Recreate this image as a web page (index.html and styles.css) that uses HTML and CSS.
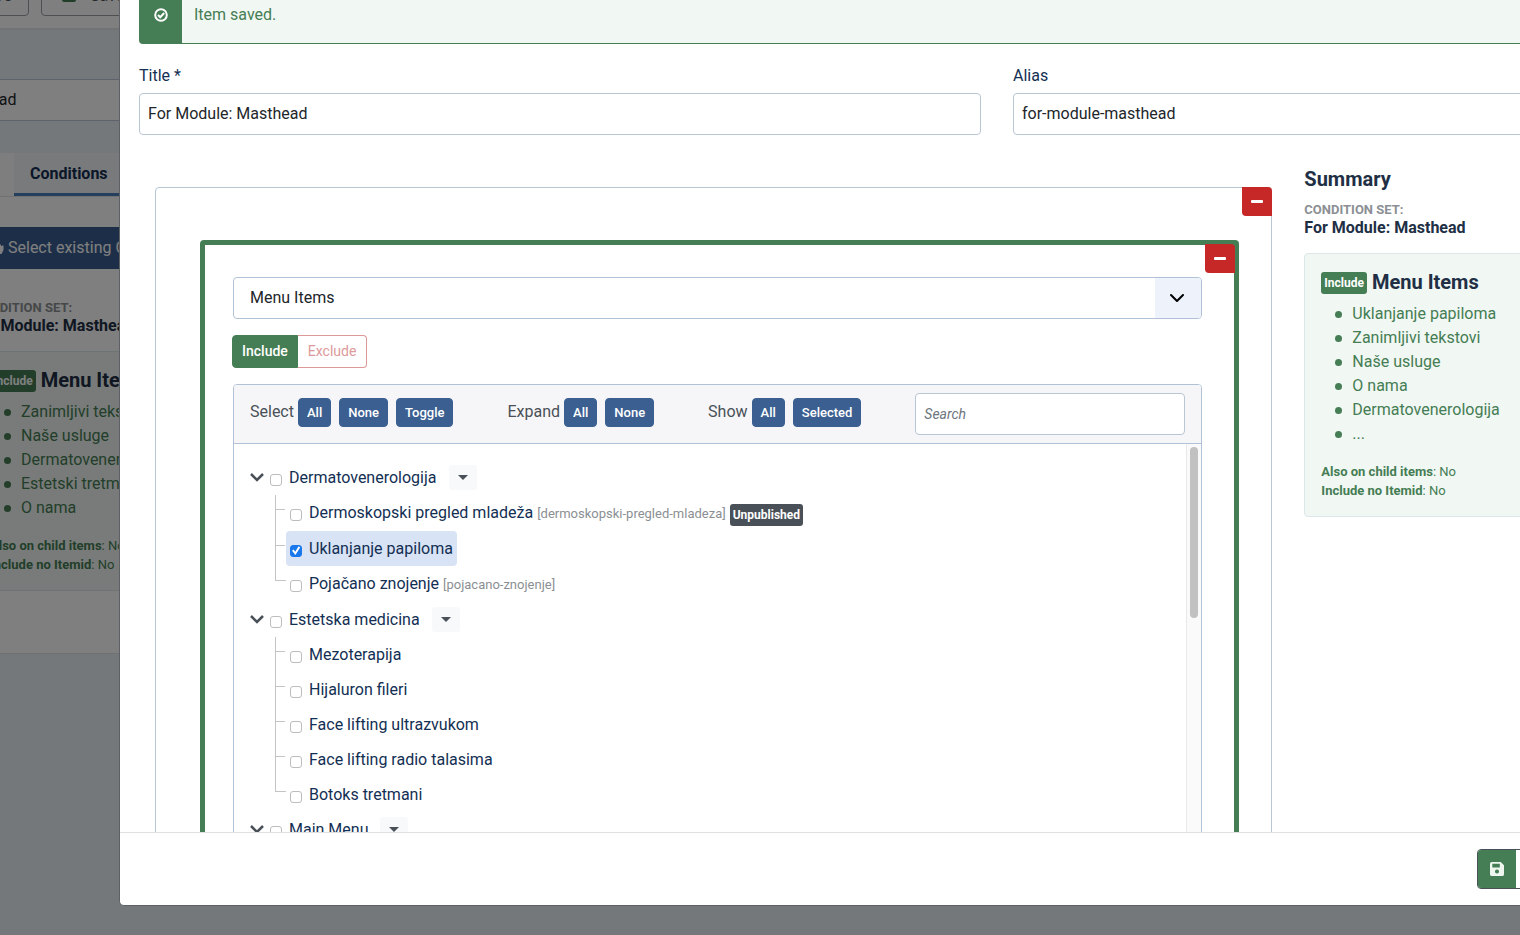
FILE: index.html
```html
<!DOCTYPE html>
<html lang="en">
<head>
  <meta charset="UTF-8">
  <title>Conditions</title>
  <link rel="stylesheet" href="styles.css">
</head>
<body>

  <!-- Module edit page, under the backdrop -->
  <div class="page">
    <div class="toolbar">
      <button class="tool-button" type="button">Save</button>
      <button class="tool-button" type="button"><span class="tool-icon"></span>Save &amp; Close</button>
    </div>

    <input class="text-input page-title" type="text" aria-label="Title" value="For Module: Masthead">

    <div class="tabs">
      <button class="tab" type="button">Module</button>
      <button class="tab active" type="button">Conditions</button>
    </div>

    <div class="panel">
      <button class="select-button" type="button">
        <svg width="15" height="16" viewBox="0 0 15 16"><path d="M4 8V2a1 1 0 0 1 2 0v4h1V5h2v1h1V5.500h2V7h1V6.500h1.500V11l-2 4H6L1 9.500 2.500 8 4 9z" fill="currentColor"/></svg>
        Select existing Condition Set
      </button>
      <div class="summary">
        <div class="summary-label">Condition Set:</div>
        <div class="summary-name">For Module: Masthead</div>
        <div class="summary-card">
          <h3><span class="badge badge-green">Include</span>Menu Items</h3>
          <ul>
            <li>Zanimljivi tekstovi</li>
            <li>Naše usluge</li>
            <li>Dermatovenerologija</li>
            <li>Estetski tretmani</li>
            <li>O nama</li>
          </ul>
          <p><b>Also on child items</b>: No<br><b>Include no Itemid</b>: No</p>
        </div>
      </div>
    </div>
  </div>

  <div class="backdrop"></div>

  <!-- Condition modal -->
  <div class="modal">
    <div class="modal-body">
      <div class="alert">
        <div class="alert-icon">
          <svg width="14" height="14" viewBox="0 0 14 14" fill="none" stroke="currentColor" stroke-width="2"><circle cx="7" cy="7" r="5.800"/><path d="M4 7l2.200 2.200L10.200 5"/></svg>
        </div>
        <div class="alert-text">Item saved.</div>
      </div>

      <div class="grid fields">
        <div class="field">
          <label for="title">Title *</label>
          <input class="text-input" id="title" type="text" value="For Module: Masthead">
        </div>
        <div class="field">
          <label for="alias">Alias</label>
          <input class="text-input" id="alias" type="text" value="for-module-masthead">
        </div>
      </div>

      <div class="grid columns">
        <div class="group">
          <button class="remove-button" type="button" aria-label="Remove group"><span class="minus"></span></button>

          <div class="rule">
            <button class="remove-button" type="button" aria-label="Remove rule"><span class="minus"></span></button>

            <div class="select-wrap">
              <select class="select" aria-label="Rule type">
                <option>Menu Items</option>
              </select>
              <span class="select-arrow">
                <svg width="16" height="16" viewBox="0 0 16 16" fill="none" stroke="#000" stroke-width="2" stroke-linecap="round" stroke-linejoin="round"><path d="M1 5l6 6 6-6"/></svg>
              </span>
            </div>

            <div class="switch">
              <input type="radio" name="mode" id="mode-include" checked>
              <label for="mode-include">Include</label>
              <input type="radio" name="mode" id="mode-exclude">
              <label for="mode-exclude">Exclude</label>
            </div>

            <div class="tree">
              <div class="tree-header">
                <div class="tree-actions">
                  <span>Select</span>
                  <button class="small-button" type="button">All</button>
                  <button class="small-button" type="button">None</button>
                  <button class="small-button" type="button">Toggle</button>
                </div>
                <div class="tree-actions">
                  <span>Expand</span>
                  <button class="small-button" type="button">All</button>
                  <button class="small-button" type="button">None</button>
                </div>
                <div class="tree-actions">
                  <span>Show</span>
                  <button class="small-button" type="button">All</button>
                  <button class="small-button" type="button">Selected</button>
                </div>
                <input class="text-input search" type="text" placeholder="Search" aria-label="Search">
              </div>

              <div class="tree-body">
                <ul class="tree-list">
                  <li>
                    <div class="tree-row">
                      <svg class="chevron" width="14" height="10" viewBox="0 0 14 10"><path d="M1 1l6 6 6-6"/></svg>
                      <label class="tree-item"><input type="checkbox">Dermatovenerologija</label>
                      <button class="caret-button" type="button" aria-label="Actions"><span class="caret"></span></button>
                    </div>
                    <ul class="tree-children">
                      <li class="tree-row noted">
                        <span class="branch"></span>
                        <label class="tree-item"><input type="checkbox">Dermoskopski pregled mladeža</label>
                        <small>[dermoskopski-pregled-mladeza]</small>
                        <span class="badge badge-dark">Unpublished</span>
                      </li>
                      <li class="tree-row">
                        <span class="branch"></span>
                        <label class="tree-item selected"><input type="checkbox" checked>Uklanjanje papiloma</label>
                      </li>
                      <li class="tree-row noted">
                        <span class="branch"></span>
                        <label class="tree-item"><input type="checkbox">Pojačano znojenje</label>
                        <small>[pojacano-znojenje]</small>
                      </li>
                    </ul>
                  </li>
                  <li>
                    <div class="tree-row">
                      <svg class="chevron" width="14" height="10" viewBox="0 0 14 10"><path d="M1 1l6 6 6-6"/></svg>
                      <label class="tree-item"><input type="checkbox">Estetska medicina</label>
                      <button class="caret-button" type="button" aria-label="Actions"><span class="caret"></span></button>
                    </div>
                    <ul class="tree-children">
                      <li class="tree-row"><span class="branch"></span><label class="tree-item"><input type="checkbox">Mezoterapija</label></li>
                      <li class="tree-row"><span class="branch"></span><label class="tree-item"><input type="checkbox">Hijaluron fileri</label></li>
                      <li class="tree-row"><span class="branch"></span><label class="tree-item"><input type="checkbox">Face lifting ultrazvukom</label></li>
                      <li class="tree-row"><span class="branch"></span><label class="tree-item"><input type="checkbox">Face lifting radio talasima</label></li>
                      <li class="tree-row"><span class="branch"></span><label class="tree-item"><input type="checkbox">Botoks tretmani</label></li>
                    </ul>
                  </li>
                  <li>
                    <div class="tree-row">
                      <svg class="chevron" width="14" height="10" viewBox="0 0 14 10"><path d="M1 1l6 6 6-6"/></svg>
                      <label class="tree-item"><input type="checkbox">Main Menu</label>
                      <button class="caret-button" type="button" aria-label="Actions"><span class="caret"></span></button>
                    </div>
                  </li>
                </ul>
                <div class="scrollbar"><div class="thumb"></div></div>
              </div>
            </div>
          </div>
        </div>

        <div class="summary">
          <h2>Summary</h2>
          <div class="summary-label">Condition Set:</div>
          <div class="summary-name">For Module: Masthead</div>
          <div class="summary-card">
            <h3><span class="badge badge-green">Include</span>Menu Items</h3>
            <ul>
              <li>Uklanjanje papiloma</li>
              <li>Zanimljivi tekstovi</li>
              <li>Naše usluge</li>
              <li>O nama</li>
              <li>Dermatovenerologija</li>
              <li>...</li>
            </ul>
            <p><b>Also on child items</b>: No<br><b>Include no Itemid</b>: No</p>
          </div>
        </div>
      </div>
    </div>

    <div class="modal-footer">
      <button class="save-button" type="button" aria-label="Save">
        <span class="save-icon">
          <svg width="14" height="14" viewBox="0 0 15 15"><path fill="currentColor" fill-rule="evenodd" d="M2 0h9.500L15 3.500V13a2 2 0 0 1-2 2H2a2 2 0 0 1-2-2V2a2 2 0 0 1 2-2zM2.500 2v4h8V2zM7.500 8a2.200 2.200 0 1 0 0 4.400A2.200 2.200 0 0 0 7.500 8z"/></svg>
        </span>
      </button>
    </div>
  </div>

</body>
</html>
```

FILE: styles.css
```css
* {
  box-sizing: border-box;
}

body {
  margin: 0;
  height: 100vh;
  overflow: hidden;
  background-color: #ebf1f6;
  font-family: Roboto, "Liberation Sans", sans-serif;
  font-size: 16px;
  line-height: 24px;
  color: #212529;
}

button, input, select {
  font-family: inherit;
  font-size: 16px;
  margin: 0;
}

h2, h3, p, ul {
  margin: 0;
  padding: 0;
}

h2, h3 {
  font-size: 20px;
  line-height: 24px;
  font-weight: bold;
  color: #212f45;
}

.text-input {
  display: block;
  width: 100%;
  height: 42px;
  padding: 0 8px 2px;
  border: 1px solid #b9c6d4;
  border-radius: 4px;
  background-color: white;
  color: #22262a;
}

/* Page behind */
.page {
  margin: -36px 0 0 -152px;
}

.toolbar {
  display: flex;
  gap: 12px;
  padding: 12px 0 12px 61px;
  background-color: white;
  border-bottom: 2px solid #e2e6ea;
}

.tool-button {
  display: flex;
  align-items: center;
  justify-content: flex-end;
  gap: 14px;
  width: 120px;
  height: 40px;
  padding: 0 16px 2px 20px;
  border: 1px solid #9a9fa6;
  border-radius: 4px;
  background-color: white;
  color: #495057;
  white-space: nowrap;
}

.tool-button + .tool-button {
  width: 180px;
  justify-content: flex-start;
}

.tool-icon {
  width: 14px;
  height: 14px;
  border-radius: 2px;
  background-color: #457d54;
}

.page-title {
  margin-top: 49px;
}

.tabs {
  display: flex;
  margin-top: 32px;
  background-color: white;
  border-bottom: 1px solid #dfe3e7;
}

.tab {
  min-width: 166px;
  height: 43px;
  padding: 0 16px;
  border: none;
  border-bottom: 3px solid transparent;
  background-color: #fdfdfe;
  font-weight: bold;
  text-align: left;
  color: #132f53;
}

.tab.active {
  background-color: #f3f5f7;
  border-bottom-color: #4a80bd;
}

.panel {
  padding: 30px 0 62px 125px;
  background-color: #fefefe;
  border-bottom: 1px solid #dfe3e7;
}

.select-button {
  display: flex;
  align-items: center;
  gap: 4px;
  width: 100%;
  height: 42px;
  margin-bottom: 29px;
  padding: 0 16px 2px;
  border: none;
  background-color: #3b5f91;
  color: white;
}

.backdrop {
  position: fixed;
  inset: 0;
  background-color: rgba(0, 0, 0, 0.5);
}

/* Modal */
.modal {
  position: fixed;
  top: 0;
  left: 119px;
  right: -355px;
  bottom: 29px;
  display: flex;
  flex-direction: column;
  border: 1px solid #5d6165;
  border-top: none;
  border-radius: 0 0 5px 5px;
  background-color: white;
}

.modal-body {
  flex: 1;
  min-height: 0;
  overflow: hidden;
  padding: 0 19px;
}

.modal-footer {
  display: flex;
  justify-content: flex-end;
  padding: 16px 15px;
  border-top: 1px solid #dee0e2;
}

.save-button {
  width: 382px;
  height: 40px;
  padding: 0;
  border: 1px solid #495057;
  border-radius: 4px;
  background-color: white;
  overflow: hidden;
}

.save-icon {
  display: flex;
  align-items: center;
  justify-content: center;
  width: 38px;
  height: 38px;
  background-color: #457d54;
  color: #edf6ef;
}

.alert {
  display: flex;
  border: 1px solid #457d54;
  border-top: none;
  border-radius: 0 0 4px 4px;
  background-color: #f1f7f3;
  color: #457d54;
}

.alert-icon {
  display: flex;
  justify-content: center;
  width: 42px;
  padding-top: 8px;
  background-color: #457d54;
  color: white;
}

.alert-text {
  padding: 3px 12px 16px;
}

.grid {
  display: grid;
  grid-template-columns: repeat(12, 1fr);
  column-gap: 32px;
}

.fields {
  margin-top: 20px;
}

.field {
  grid-column: span 6;
}

.field label {
  display: block;
  margin-bottom: 5px;
  color: #132f53;
}

.columns {
  margin-top: 32px;
  align-items: start;
}

.group {
  grid-column: span 8;
  position: relative;
  margin: 20px 0 0 16px;
  padding: 52px 32px 32px 44px;
  border: 1px solid #b9c6d4;
  border-radius: 4px;
}

.rule {
  position: relative;
  padding: 32px 32px 32px 28px;
  border: 5px solid #457d54;
  border-radius: 4px;
}

.remove-button {
  position: absolute;
  top: -1px;
  right: -1px;
  display: flex;
  align-items: center;
  justify-content: center;
  width: 30px;
  height: 29px;
  padding: 0;
  border: none;
  border-radius: 0 4px 0 4px;
  background-color: #c52827;
}

.minus {
  width: 12px;
  height: 3px;
  border-radius: 1px;
  background-color: white;
}

.select-wrap {
  position: relative;
}

.select {
  display: block;
  width: 100%;
  height: 42px;
  padding: 0 16px 2px;
  appearance: none;
  border: 1px solid #b2c2d6;
  border-radius: 4px;
  background-color: white;
  color: #22262a;
}

.select-arrow {
  position: absolute;
  top: 1px;
  right: 1px;
  bottom: 1px;
  display: flex;
  align-items: center;
  justify-content: center;
  width: 46px;
  border-radius: 0 3px 3px 0;
  background-color: #edf2fb;
  pointer-events: none;
}

.switch {
  display: flex;
  margin: 16px 0 16px -1px;
}

.switch input {
  position: absolute;
  opacity: 0;
}

.switch label {
  height: 33px;
  padding: 0 10px;
  border: 1px solid #dc9797;
  border-left: none;
  border-radius: 0 4px 4px 0;
  font-size: 14px;
  line-height: 31px;
  color: #dd9a9a;
}

.switch input:checked + label {
  padding: 0 9px;
  border: 1px solid #457d54;
  border-radius: 4px 0 0 4px;
  background-color: #457d54;
  font-weight: 500;
  color: white;
}

/* Menu item tree */
.tree {
  border: 1px solid #b2c2d6;
  border-radius: 4px 4px 0 0;
}

.tree-header {
  display: flex;
  align-items: center;
  gap: 54px;
  padding: 8px 16px;
  border-bottom: 1px solid #b2c2d6;
  border-radius: 3px 3px 0 0;
  background-color: #f6f6f8;
}

.tree-actions {
  display: flex;
  align-items: center;
  gap: 8px;
  padding-bottom: 4px;
  color: #495057;
}

.tree-actions span {
  margin-right: -4px;
}

.small-button {
  height: 29px;
  padding: 0 8px;
  border: 1px solid #3b5f91;
  border-radius: 4px;
  background-color: #3b5f91;
  font-size: 13px;
  font-weight: 500;
  color: white;
}

.search {
  flex: 1;
  min-width: 0;
  width: auto;
}

.search::placeholder {
  font-size: 14px;
  font-style: italic;
  color: #6d757d;
}

.tree-body {
  display: flex;
}

.tree-list {
  flex: 1;
  padding: 16px;
}

.tree ul {
  list-style: none;
}

.tree-row {
  display: flex;
  align-items: center;
  height: 35px;
}

.tree-row.noted {
  height: 36px;
}

.tree-row small {
  padding-top: 1px;
  font-size: 13px;
  color: #8b8f93;
}

.chevron {
  margin-right: 2px;
  fill: none;
  stroke: #495057;
  stroke-width: 2.5px;
}

.tree-item {
  display: flex;
  align-items: center;
  gap: 7px;
  height: 35px;
  padding: 0 4px;
  border-radius: 4px;
  color: #132f53;
}

.tree-item.selected {
  background-color: #d9e3f6;
}

.tree-item input {
  width: 12px;
  height: 12px;
  margin-top: 4px;
  appearance: none;
  border: 1px solid #bdbdbd;
  border-radius: 3px;
  background-color: white;
}

.tree-item input:checked {
  border-color: #1878ec;
  background-color: #1878ec;
}

.tree-item input:checked::before {
  content: "";
  display: block;
  width: 10px;
  height: 10px;
  background-color: white;
  clip-path: polygon(10% 52%, 26% 40%, 42% 62%, 76% 8%, 92% 20%, 44% 94%);
}

.caret-button {
  display: flex;
  align-items: center;
  justify-content: center;
  width: 28px;
  height: 25px;
  margin-left: 8px;
  padding: 0;
  border: none;
  border-radius: 3px;
  background-color: #f8f9fb;
}

.caret {
  border: 5px solid transparent;
  border-top-color: #495057;
  border-bottom: none;
}

.tree-children {
  margin-left: 25px;
}

.branch {
  align-self: stretch;
  width: 11px;
  border-left: 1px solid #c4c4c4;
}

.branch::before {
  content: "";
  display: block;
  width: 9px;
  height: 14px;
  border-bottom: 1px solid #c4c4c4;
}

.tree-row:last-child .branch {
  border-left: none;
}

.tree-row:last-child .branch::before {
  width: 10px;
  border-left: 1px solid #c4c4c4;
}

.scrollbar {
  width: 15px;
  padding: 3px;
  border-left: 1px solid #e8e8e8;
  background-color: #fafafa;
}

.thumb {
  width: 8px;
  height: 171px;
  border-radius: 4px;
  background-color: #c1c1c1;
}

.badge {
  height: 22px;
  padding: 0 3px;
  border-radius: 3px;
  font-size: 12px;
  line-height: 22px;
  font-weight: bold;
  color: white;
}

.badge-green {
  margin-top: 2px;
  background-color: #457d54;
}

.badge-dark {
  margin-left: 4px;
  margin-top: 4px;
  background-color: #495057;
}

/* Summary */
.summary {
  grid-column: span 4;
}

.summary h2 {
  margin-bottom: 9px;
}

.summary-label {
  padding-top: 2px;
  font-size: 13px;
  line-height: 16px;
  font-weight: bold;
  text-transform: uppercase;
  color: #8b8f93;
}

.summary-name {
  line-height: 20px;
  font-weight: bold;
  color: #212f45;
}

.summary-card {
  margin-top: 15px;
  padding: 16px;
  border: 1px solid #dce7ea;
  border-radius: 4px;
  background-color: #f1f7f3;
  color: #457d54;
}

.summary-card h3 {
  display: flex;
  align-items: center;
  gap: 5px;
}

.summary-card ul {
  margin-top: 8px;
  padding-left: 14px;
  list-style: none;
}

.summary-card li {
  display: flex;
  align-items: center;
  gap: 10px;
}

.summary-card li::before {
  content: "";
  width: 7px;
  height: 7px;
  border-radius: 50%;
  background-color: #457d54;
}

.summary-card p {
  margin-top: 16px;
  font-size: 13px;
  line-height: 19px;
}
```
